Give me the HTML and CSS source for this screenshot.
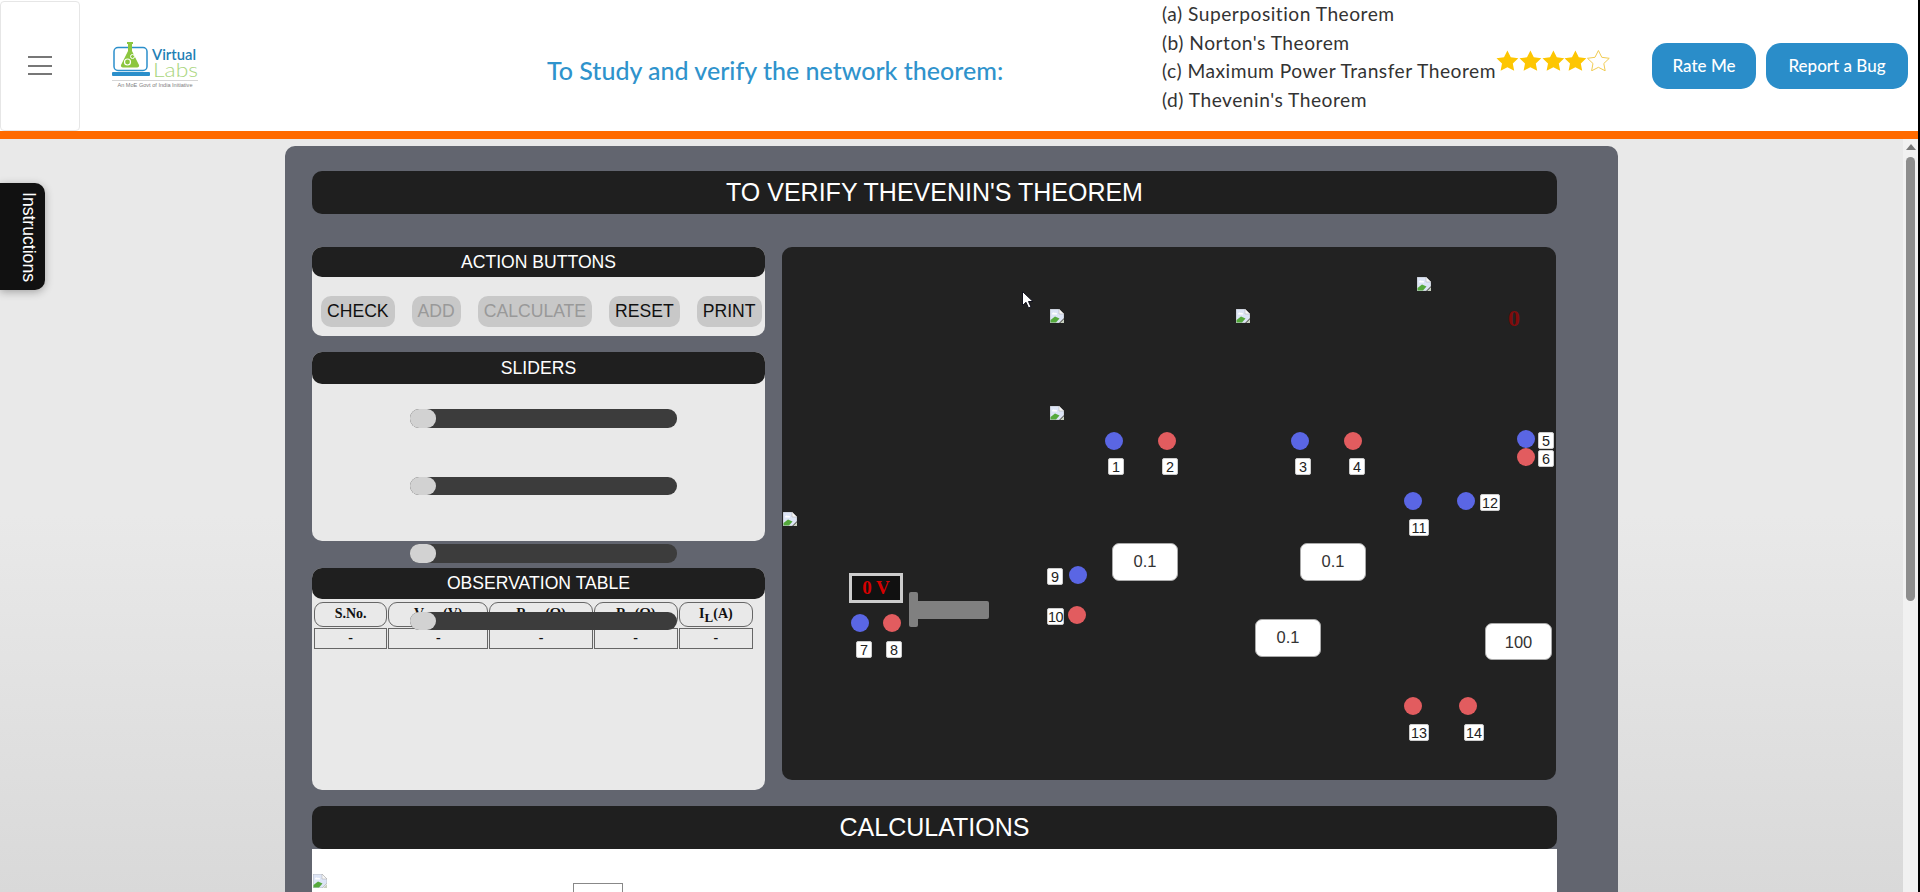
FILE: index.html
```html
<!DOCTYPE html>
<html lang="en">
<head>
  <meta charset="UTF-8">
  <title>To Study and verify the network theorem</title>
  <meta name="viewport" content="width=device-width, initial-scale=1.0" />
  <link rel="stylesheet" href="styles.css">
</head>
<body>
  <svg class="defs" width="0" height="0">
    <symbol id="broken" viewBox="0 0 14 14">
      <path d="M0 0H9L14 5V9L9 14H0Z" fill="#dde5f6" stroke="#a8a8a8" stroke-width=".6"/>
      <path d="M9 0V5H14Z" fill="#f7f7f7" stroke="#a8a8a8" stroke-width=".5"/>
      <path d="M2 5C2 3.500 4 3 5 4C6 3.500 7.500 4.500 7 5.500H2.500Z" fill="#fff"/>
      <path d="M.5 13.500V11L5 7.500L9.500 9.500L6 13.500Z" fill="#55a93c"/>
      <path d="M14 10V14H10Z" fill="#c8d0c0"/>
    </symbol>
    <symbol id="star" viewBox="1 1 22 21">
      <path d="M12 1.500L15.400 8.300L22.900 9.300L17.400 14.500L18.800 21.800L12 18.300L5.200 21.800L6.600 14.500L1.100 9.300L8.600 8.300Z"/>
    </symbol>
  </svg>

  <header class="topbar">
    <div class="menu-box">
      <span></span><span></span><span></span>
    </div>
    <svg class="logo" viewBox="0 0 88 46" width="88" height="46">
      <rect x="2" y="5.500" width="33" height="23" rx="4" fill="none" stroke="#2b8fcb" stroke-width="1.500"/>
      <rect x="0" y="30" width="38" height="4" rx="1" fill="#2b8fcb"/>
      <path d="M15 0H21V2H20V9L27 23C27.500 24.500 26.500 25.500 25 25.500H11C9.500 25.500 8.500 24.500 9 23L16 9V2H15Z" fill="#8cc63f"/>
      <circle cx="15.500" cy="20" r="3" fill="none" stroke="#fff" stroke-width="1.200"/>
      <circle cx="20.500" cy="14.500" r="2" fill="none" stroke="#fff" stroke-width="1"/>
      <text x="40" y="17.500" class="logo-top" textLength="44" lengthAdjust="spacingAndGlyphs">Virtual</text>
      <text x="41" y="34.500" class="logo-bottom" textLength="45" lengthAdjust="spacingAndGlyphs">Labs</text>
      <rect x="0" y="38" width="86" height=".7" fill="#c4c4c4"/>
      <text x="5.500" y="45" class="logo-tag" textLength="75" lengthAdjust="spacingAndGlyphs">An MoE Govt of India Initiative</text>
    </svg>
    <h1 class="exp-title">To Study and verify the network theorem:</h1>
    <ul class="theorems">
      <li>(a) Superposition Theorem</li>
      <li>(b) Norton's Theorem</li>
      <li>(c) Maximum Power Transfer Theorem</li>
      <li>(d) Thevenin's Theorem</li>
    </ul>
    <div class="stars">
      <svg class="star"><use href="#star"/></svg>
      <svg class="star"><use href="#star"/></svg>
      <svg class="star"><use href="#star"/></svg>
      <svg class="star"><use href="#star"/></svg>
      <svg class="star star-empty"><use href="#star"/></svg>
    </div>
    <button class="head-btn rate-btn">Rate Me</button>
    <button class="head-btn bug-btn">Report a Bug</button>
  </header>

  <div class="page">
    <div class="instructions">Instructions</div>

    <main class="content">
      <section class="lab">
        <h2 class="bar">TO VERIFY THEVENIN'S THEOREM</h2>

        <div class="lab-row">
          <div class="side">
            <div class="block action-block">
              <h3 class="block-head action-head">ACTION BUTTONS</h3>
              <div class="actions">
                <button class="act-btn">CHECK</button>
                <button class="act-btn" disabled>ADD</button>
                <button class="act-btn" disabled>CALCULATE</button>
                <button class="act-btn">RESET</button>
                <button class="act-btn">PRINT</button>
              </div>
            </div>

            <div class="block slider-block">
              <h3 class="block-head slider-head">SLIDERS</h3>
              <div class="sliders">
                <input type="range" min="0" max="100" value="0">
                <input type="range" min="0" max="100" value="0">
                <input type="range" min="0" max="100" value="0">
                <input type="range" min="0" max="100" value="0">
              </div>
            </div>

            <div class="block table-block">
              <h3 class="block-head">OBSERVATION TABLE</h3>
              <table class="obs">
                <colgroup>
                  <col class="c1"><col class="c2"><col class="c3"><col class="c4"><col class="c5">
                </colgroup>
                <tr>
                  <th>S.No.</th>
                  <th>V<sub>TH</sub>(V)</th>
                  <th>R<sub>TH</sub>(Ω)</th>
                  <th>R<sub>L</sub>(Ω)</th>
                  <th>I<sub>L</sub>(A)</th>
                </tr>
                <tr>
                  <td>-</td><td>-</td><td>-</td><td>-</td><td>-</td>
                </tr>
              </table>
            </div>
          </div>

          <div class="canvas">
            <svg class="pic pic-1" width="14" height="14"><use href="#broken"/></svg>
            <svg class="pic pic-2" width="14" height="14"><use href="#broken"/></svg>
            <svg class="pic pic-3" width="14" height="14"><use href="#broken"/></svg>
            <svg class="pic pic-4" width="14" height="14"><use href="#broken"/></svg>
            <svg class="pic pic-5" width="14" height="14"><use href="#broken"/></svg>

            <span class="ammeter">0</span>

            <div class="meter">0 V</div>
            <div class="probe-v"></div>
            <div class="probe-h"></div>

            <i class="dot blue d1"></i><b class="tag t1">1</b>
            <i class="dot red d2"></i><b class="tag t2">2</b>
            <i class="dot blue d3"></i><b class="tag t3">3</b>
            <i class="dot red d4"></i><b class="tag t4">4</b>
            <i class="dot blue d5"></i><b class="tag t5">5</b>
            <i class="dot red d6"></i><b class="tag t6">6</b>
            <i class="dot blue d7"></i><b class="tag t7">7</b>
            <i class="dot red d8"></i><b class="tag t8">8</b>
            <i class="dot blue d9"></i><b class="tag t9">9</b>
            <i class="dot red d10"></i><b class="tag t10">10</b>
            <i class="dot blue d11"></i><b class="tag tag-wide t11">11</b>
            <i class="dot blue d12"></i><b class="tag tag-wide t12">12</b>
            <i class="dot red d13"></i><b class="tag tag-wide t13">13</b>
            <i class="dot red d14"></i><b class="tag tag-wide t14">14</b>

            <div class="value v1">0.1</div>
            <div class="value v2">0.1</div>
            <div class="value v3">0.1</div>
            <div class="value v4">100</div>

            <svg class="cursor" width="12" height="18" viewBox="0 0 12 18">
              <path d="M.5 .5V14.500L4 11.300L6.500 17L9 16L6.500 10.500H11Z" fill="#fff" stroke="#10101c" stroke-width="1"/>
            </svg>
          </div>
        </div>

        <h2 class="bar calc-bar">CALCULATIONS</h2>
        <div class="calc-body">
          <svg class="calc-pic" width="14" height="14"><use href="#broken"/></svg>
          <div class="calc-input"></div>
        </div>
      </section>
    </main>

    <div class="scrollbar">
      <div class="scroll-up"></div>
      <div class="scroll-thumb"></div>
    </div>
  </div>
</body>
</html>
```

FILE: styles.css
```css
* {
  box-sizing: border-box;
}

html, body {
  margin: 0;
  height: 892px;
  overflow: hidden;
}

body {
  font-family: "Liberation Sans", Arial, sans-serif;
  background: #000;
  padding-right: 2px;
}

.defs {
  position: absolute;
}

/* top bar */
.topbar {
  display: flex;
  align-items: center;
  height: 139px;
  background: #fff;
  border-bottom: 8px solid #ff6a00;
}

.menu-box {
  width: 80px;
  height: 130px;
  flex-shrink: 0;
  display: flex;
  flex-direction: column;
  align-items: center;
  justify-content: center;
  gap: 6.500px;
  border: 1px solid #e6e6e6;
  border-radius: 4px;
}

.menu-box span {
  display: block;
  width: 24px;
  height: 2px;
  background: #777;
}

.logo {
  flex-shrink: 0;
  margin-left: 32px;
  margin-top: -1px;
}

.logo-top {
  font: 600 16px Lato, sans-serif;
  fill: #1f7fb5;
}

.logo-bottom {
  font: 300 20px Lato, sans-serif;
  fill: #a8d57c;
}

.logo-tag {
  font: 5px "Liberation Sans", sans-serif;
  fill: #808080;
}

.exp-title {
  margin: 8px 0 0 347px;
  width: 615px;
  flex-shrink: 0;
  font: 500 25px Lato, sans-serif;
  color: #2f93cc;
}

.theorems {
  list-style: none;
  align-self: flex-start;
  margin: 0;
  padding: 0;
  width: 334px;
  flex-shrink: 0;
  font: 400 19.200px/28.700px Lato, sans-serif;
  letter-spacing: .5px;
  color: #333;
  white-space: nowrap;
}

.stars {
  display: flex;
  width: 114px;
  margin-top: -10px;
  flex-shrink: 0;
}

.star {
  width: 22.800px;
  height: 21px;
  fill: #fdc602;
}

.star-empty {
  fill: #fff;
  stroke: #f0cb52;
  stroke-width: 1;
}

.head-btn {
  height: 46px;
  border: none;
  border-radius: 15px;
  background: #2a8dc9;
  color: #fff;
  font: 500 17px Lato, sans-serif;
  flex-shrink: 0;
}

.rate-btn {
  width: 104px;
  margin-left: 42px;
}

.bug-btn {
  width: 142px;
  margin-left: 10px;
}

/* below the bar */
.page {
  position: relative;
  display: flex;
  height: 753px;
}

.content {
  flex: 1;
  overflow: hidden;
  background: linear-gradient(#e9e9e9 50%, #d9d9d9 100%);
  padding: 7px 0 0 285px;
}

.lab {
  width: 1333px;
  min-height: 760px;
  padding: 25px 61px 0 27px;
  background: #62656f;
  border-radius: 10px 10px 0 0;
}

.bar {
  margin: 0;
  height: 43px;
  background: #1f1f1f;
  border-radius: 10px;
  color: #fff;
  font-size: 25px;
  font-weight: 400;
  line-height: 43px;
  text-align: center;
}

.lab-row {
  display: flex;
  align-items: flex-start;
  gap: 17px;
  margin-top: 33px;
}

.side {
  width: 453px;
  flex-shrink: 0;
}

.block {
  background: #e9e9e9;
  border-radius: 10px;
}

.block-head {
  margin: 0;
  height: 31px;
  background: #1f1f1f;
  border-radius: 10px;
  color: #fff;
  font-size: 17.600px;
  font-weight: 400;
  line-height: 30px;
  text-align: center;
}

.action-block {
  height: 89px;
}

.action-head {
  height: 30px;
}

.actions {
  display: flex;
  gap: 17px;
  padding: 19px 0 0 9px;
}

.act-btn {
  height: 31px;
  padding: 0 6px;
  border: none;
  border-radius: 10px;
  background: #c8c8c8;
  color: #111;
  font-family: inherit;
  font-size: 17.600px;
}

.act-btn:disabled {
  color: #999;
}

.slider-block {
  height: 189px;
  margin-top: 16px;
}

.slider-head {
  height: 32px;
  line-height: 32px;
}

.sliders {
  position: relative;
  z-index: 2;
  display: flex;
  flex-direction: column;
  align-items: center;
  gap: 49px;
  padding: 25px 0 0 9px;
}

.sliders input {
  -webkit-appearance: none;
  appearance: none;
  display: block;
  width: 267px;
  height: 18.500px;
  margin: 0;
  background: #3c3c3c;
  border-radius: 9px;
}

.sliders input::-webkit-slider-thumb {
  -webkit-appearance: none;
  width: 26px;
  height: 18.500px;
  border-radius: 9px;
  background: #d2d2d2;
}

.table-block {
  height: 222px;
  margin-top: 27px;
}

.obs {
  table-layout: fixed;
  width: 441px;
  margin-left: 1px;
  margin-top: 1.500px;
  border-spacing: 1.500px;
  border-collapse: separate;
  font-family: "Liberation Serif", "Times New Roman", serif;
  font-size: 14px;
  color: #111;
}

.c1 { width: 73px; }
.c2 { width: 100px; }
.c3 { width: 103px; }
.c4 { width: 84px; }
.c5 { width: 74px; }

.obs th {
  height: 25px;
  padding: 0 0 1px;
  border: 1px solid #666;
  border-radius: 9px;
  line-height: 14px;
}

.obs sub {
  font-size: 13px;
  line-height: 0;
}

.obs td {
  height: 21px;
  padding: 0;
  border: 1px solid #666;
  text-align: center;
  font-weight: bold;
}

/* diagram */
.canvas {
  position: relative;
  width: 774px;
  height: 533px;
  flex-shrink: 0;
  background: #222;
  border-radius: 10px;
}

.canvas > * {
  position: absolute;
}

.pic-1 { left: 268px; top: 62px; }
.pic-2 { left: 268px; top: 159px; }
.pic-3 { left: 1px; top: 265px; }
.pic-4 { left: 454px; top: 62px; }
.pic-5 { left: 635px; top: 30px; }

.ammeter {
  left: 726px;
  top: 58px;
  color: #800c0c;
  font: bold 24px "Liberation Serif", serif;
}

.meter {
  left: 67px;
  top: 326px;
  width: 54px;
  height: 30px;
  border: 3px solid #ccc;
  background: #111;
  color: #d40000;
  font: bold 19px/24px "Liberation Serif", serif;
  text-align: center;
}

.probe-v {
  left: 127px;
  top: 345px;
  width: 9px;
  height: 35px;
  background: #808080;
  border-radius: 2px;
}

.probe-h {
  left: 136px;
  top: 354px;
  width: 71px;
  height: 18px;
  background: #808080;
  border-radius: 0 2px 2px 0;
}

.dot {
  width: 18px;
  height: 18px;
  border-radius: 50%;
}

.blue { background: #5a66e4; }
.red { background: #e25c5f; }

.d1 { left: 323px; top: 185px; }
.d2 { left: 376px; top: 185px; }
.d3 { left: 509px; top: 185px; }
.d4 { left: 562px; top: 185px; }
.d5 { left: 735px; top: 183px; }
.d6 { left: 735px; top: 201px; }
.d7 { left: 69px; top: 367px; }
.d8 { left: 101px; top: 367px; }
.d9 { left: 287px; top: 319px; }
.d10 { left: 286px; top: 359px; }
.d11 { left: 622px; top: 245px; }
.d12 { left: 675px; top: 245px; }
.d13 { left: 622px; top: 450px; }
.d14 { left: 677px; top: 450px; }

.tag {
  width: 16px;
  height: 17px;
  background: #fff;
  border: 1px solid #ccc;
  border-radius: 2px;
  color: #222;
  font-size: 14.400px;
  font-weight: 400;
  line-height: 16px;
  text-align: center;
}

.tag-wide {
  width: 20px;
}

.t1 { left: 326px; top: 211px; }
.t2 { left: 380px; top: 211px; }
.t3 { left: 513px; top: 211px; }
.t4 { left: 567px; top: 211px; }
.t5 { left: 756px; top: 185px; }
.t6 { left: 756px; top: 203px; }
.t7 { left: 74px; top: 394px; }
.t8 { left: 104px; top: 394px; }
.t9 { left: 265px; top: 321px; }
.t10 { left: 265px; top: 361px; width: 17px; letter-spacing: -.5px; }
.t11 { left: 627px; top: 272px; }
.t12 { left: 698px; top: 247px; }
.t13 { left: 627px; top: 477px; }
.t14 { left: 682px; top: 477px; }

.value {
  width: 66px;
  height: 38px;
  padding-top: 7px;
  background: #fff;
  border: 1px solid #aaa;
  border-radius: 7px;
  color: #333;
  font-size: 16.500px;
  line-height: 20px;
  text-align: center;
}

.v1 { left: 330px; top: 296px; }
.v2 { left: 518px; top: 296px; }
.v3 { left: 473px; top: 372px; }
.v4 { left: 703px; top: 376px; width: 67px; height: 37px; padding-top: 8px; }

.cursor {
  left: 240px;
  top: 44px;
}

/* calculations */
.calc-bar {
  margin-top: 16px;
}

.calc-body {
  position: relative;
  display: flex;
  align-items: flex-start;
  height: 60px;
  background: #fff;
}

.calc-pic {
  margin: 25px 0 0 1px;
  flex-shrink: 0;
}

.calc-input {
  width: 50px;
  height: 30px;
  margin: 34px 0 0 246px;
  border: 1px solid #888;
}

/* side tab */
.instructions {
  position: absolute;
  left: 0;
  top: 44px;
  width: 45px;
  height: 107px;
  padding-left: 12px;
  background: #111;
  border-radius: 0 10px 10px 0;
  box-shadow: 0 2px 8px rgba(0, 0, 0, 0.3);
  color: #fff;
  font-size: 17.600px;
  line-height: 33px;
  text-align: center;
  writing-mode: vertical-rl;
}

.scrollbar {
  width: 15px;
  flex-shrink: 0;
  background: #f1f1f1;
  padding-top: 5px;
}

.scroll-up {
  width: 0;
  height: 0;
  margin: 0 auto;
  border-left: 5px solid transparent;
  border-right: 5px solid transparent;
  border-bottom: 6px solid #777;
}

.scroll-thumb {
  width: 9px;
  height: 444px;
  margin: 7px auto 0;
  background: #8d8d8d;
  border-radius: 5px;
}
```
